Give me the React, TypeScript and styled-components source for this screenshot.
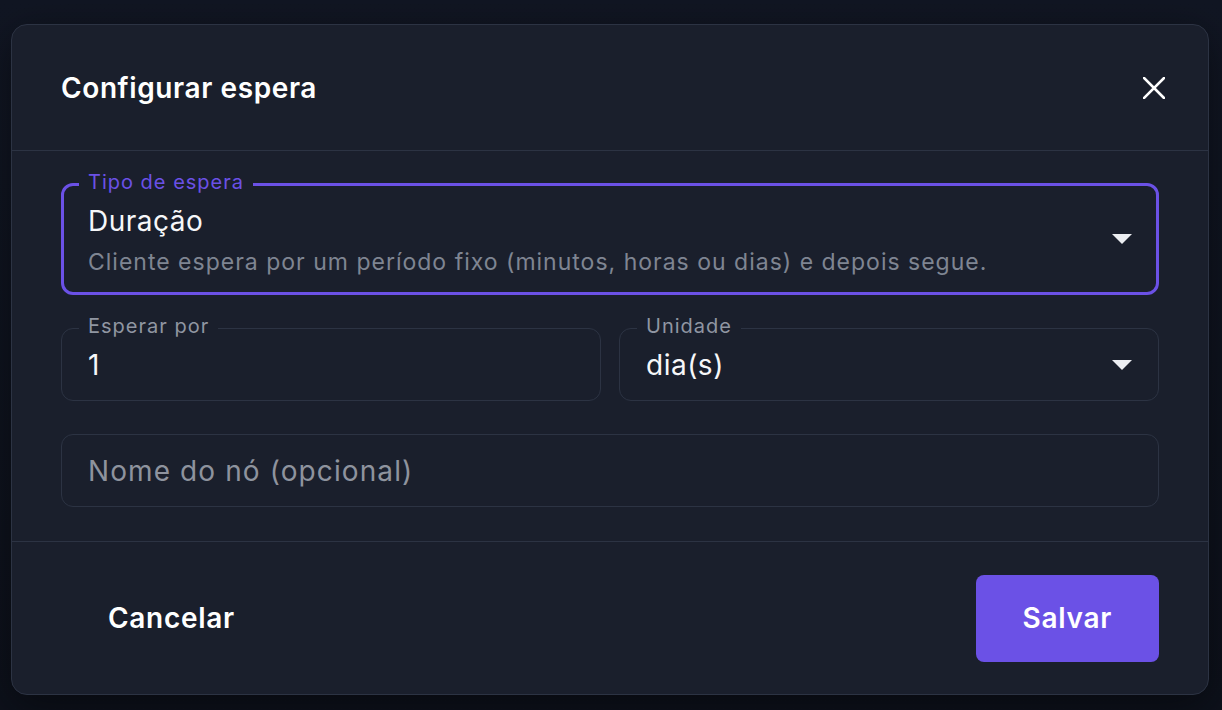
import React from 'react';
import styled, { createGlobalStyle } from 'styled-components';

const GlobalStyle = createGlobalStyle`
  html, body {
    margin: 0;
    padding: 0;
    background: #0f1420;
  }
  body {
    font-family: Inter, 'Noto Sans', sans-serif;
  }
`;

const Page = styled.div`
  width: 1222px;
  height: 710px;
  box-sizing: border-box;
  padding: 24px 13px 15px 11px;
  background: linear-gradient(180deg, #111623 0%, #0d111b 100%);
`;

const Dialog = styled.div`
  box-sizing: border-box;
  width: 1198px;
  height: 671px;
  display: flex;
  flex-direction: column;
  background: #1a1f2c;
  border: 1px solid #2c3343;
  border-radius: 16px;
  box-shadow: 0 10px 40px rgba(0, 0, 0, 0.45);
`;

const Header = styled.div`
  box-sizing: border-box;
  height: 126px;
  display: flex;
  align-items: center;
  justify-content: space-between;
  padding: 0 43px 0 49px;
  border-bottom: 1px solid #2c3343;
`;

const Title = styled.h2`
  margin: 0;
  font-size: 28px;
  font-weight: 600;
  letter-spacing: 0.6px;
  color: #ffffff;
`;

const CloseButton = styled.button`
  width: 22px;
  height: 22px;
  padding: 0;
  border: none;
  background: none;
  cursor: pointer;
  display: flex;
`;

const Body = styled.div`
  display: flex;
  flex-direction: column;
  gap: 33px;
  padding: 32px 49px 34px;
  border-bottom: 1px solid #2c3343;
`;

const Row = styled.div`
  display: grid;
  grid-template-columns: 1fr 1fr;
  gap: 18px;
`;

const Field = styled.div<{ $focused?: boolean; $height: number }>`
  position: relative;
  box-sizing: border-box;
  height: ${({ $height }) => $height}px;
  display: flex;
  align-items: center;
  padding: 0 ${({ $focused }) => ($focused ? 24 : 26)}px;
  border: ${({ $focused }) => ($focused ? '3px solid #6b51e6' : '1px solid #2c3343')};
  border-radius: 12px;
  cursor: text;
`;

const FloatLabel = styled.span<{ $focused?: boolean }>`
  position: absolute;
  top: ${({ $focused }) => ($focused ? -16 : -15)}px;
  left: ${({ $focused }) => ($focused ? 15 : 17)}px;
  padding: 0 9px;
  background: #1a1f2c;
  font-size: 20px;
  line-height: 24px;
  letter-spacing: 1px;
  color: ${({ $focused }) => ($focused ? '#6b51e6' : '#9096a2')};
`;

const SelectContent = styled.div`
  flex: 1;
  display: flex;
  flex-direction: column;
  gap: 10px;
  padding-top: 2px;
`;

const Value = styled.span`
  font-size: 28px;
  line-height: 34px;
  letter-spacing: 0.5px;
  color: #f6f7f9;
`;

const Description = styled.span`
  font-size: 23px;
  line-height: 28px;
  letter-spacing: 1px;
  color: #7f8592;
`;

const Placeholder = styled.span`
  font-size: 28px;
  line-height: 34px;
  letter-spacing: 1.1px;
  color: #8e939e;
`;

const Arrow = styled.svg`
  margin-left: auto;
  flex-shrink: 0;
`;

const Footer = styled.div`
  flex: 1;
  display: flex;
  align-items: center;
  justify-content: space-between;
  padding: 0 49px;
`;

const Button = styled.button<{ $primary?: boolean }>`
  height: 87px;
  padding: 0 47px;
  border: none;
  border-radius: 8px;
  font-family: inherit;
  font-size: 28px;
  font-weight: 600;
  letter-spacing: 0.7px;
  color: #ffffff;
  background: ${({ $primary }) => ($primary ? '#6b51e6' : 'transparent')};
  cursor: pointer;
`;

const SelectArrow = () => (
  <Arrow width="20" height="10" viewBox="0 0 20 10">
    <polygon points="0,0 20,0 10,10" fill="#eceef2" />
  </Arrow>
);

export default function App() {
  return (
    <>
      <GlobalStyle />
      <Page>
        <Dialog>
          <Header>
            <Title>Configurar espera</Title>
            <CloseButton aria-label="Fechar">
              <svg width="22" height="22" viewBox="0 0 22 22">
                <path d="M1 1 L21 21 M21 1 L1 21" stroke="#ffffff" strokeWidth="2.6" strokeLinecap="square" />
              </svg>
            </CloseButton>
          </Header>
          <Body>
            <Field $focused $height={112}>
              <FloatLabel $focused>Tipo de espera</FloatLabel>
              <SelectContent>
                <Value>Duração</Value>
                <Description>Cliente espera por um período fixo (minutos, horas ou dias) e depois segue.</Description>
              </SelectContent>
              <SelectArrow />
            </Field>
            <Row>
              <Field $height={73}>
                <FloatLabel>Esperar por</FloatLabel>
                <Value>1</Value>
              </Field>
              <Field $height={73}>
                <FloatLabel>Unidade</FloatLabel>
                <Value>dia(s)</Value>
                <SelectArrow />
              </Field>
            </Row>
            <Field $height={73}>
              <Placeholder>Nome do nó (opcional)</Placeholder>
            </Field>
          </Body>
          <Footer>
            <Button>Cancelar</Button>
            <Button $primary>Salvar</Button>
          </Footer>
        </Dialog>
      </Page>
    </>
  );
}
